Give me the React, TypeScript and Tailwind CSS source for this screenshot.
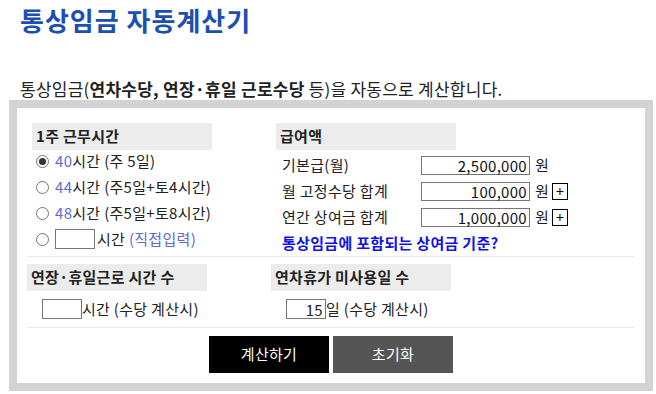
import React from "react";

const font = { fontFamily: '"Noto Sans CJK KR", "Noto Sans", sans-serif' };

function Radio({ checked }: { checked?: boolean }) {
  return (
    <span className="w-[13px] h-[13px] rounded-full border border-[#767676] bg-white flex items-center justify-center shrink-0">
      {checked && <span className="w-[7px] h-[7px] rounded-full bg-[#333]" />}
    </span>
  );
}

function MoneyRow({ label, value, plus }: { label: string; value: string; plus?: boolean }) {
  return (
    <div className="h-[26px] flex items-center">
      <div className="w-[145px] pl-[6px] text-[15px] tracking-[0.3px] text-[#222]">{label}</div>
      <div className="w-[109px] h-[19px] border border-[#767676] flex items-center justify-end pr-[2px] text-[15px] tracking-[0.3px] text-[#111] leading-none">
        {value}
      </div>
      <span className="ml-[5px] text-[15px] text-[#222]">원</span>
      {plus && (
        <span className="ml-[3px] w-[16px] h-[17px] border border-black flex items-center justify-center text-[14px] leading-none text-black">
          +
        </span>
      )}
    </div>
  );
}

const body = "text-[15px] tracking-[0.3px] text-[#222]";
const head = "w-[180px] h-[27px] bg-[#ececec] flex items-center pl-[4px] text-[15px] tracking-[0.3px] font-bold text-[#222]";

export default function App() {
  return (
    <div className="w-[656px] h-[394px] bg-white overflow-hidden" style={font}>
      <div className="h-[40px] pl-[20px] flex items-center">
        <h1 className="text-[26px] tracking-[1px] font-bold text-[#1c4fb0] leading-none">통상임금 자동계산기</h1>
      </div>
      <div className="mt-[37px] h-[22px] pl-[20px] flex items-center text-[17px] tracking-[0.25px] text-[#222] leading-none">
        통상임금(<b>연차수당, 연장·휴일 근로수당</b>&nbsp;등)을 자동으로 계산합니다.
      </div>
      <div className="mt-[1px] ml-[9px] w-[644px] h-[291px] border-[8px] border-[#d3d3d3] bg-white px-[10px]">
        {/* section 1 */}
        <div className="flex pt-[15px] h-[148px]">
          <div className="w-[244px] pl-[5px]">
            <div className={head}>1주 근무시간</div>
            <div className="-mt-[2px]">
              <div className={`h-[26px] flex items-center pl-[4px] ${body}`}>
                <Radio checked />
                <span className="ml-[6px] text-[#5b6bd6]">40</span>
                <span>시간 (주 5일)</span>
              </div>
              <div className={`h-[26px] flex items-center pl-[4px] ${body}`}>
                <Radio />
                <span className="ml-[6px] text-[#5b6bd6]">44</span>
                <span>시간 (주5일+토4시간)</span>
              </div>
              <div className={`h-[26px] flex items-center pl-[4px] ${body}`}>
                <Radio />
                <span className="ml-[6px] text-[#5b6bd6]">48</span>
                <span>시간 (주5일+토8시간)</span>
              </div>
              <div className={`h-[26px] flex items-center pl-[4px] ${body}`}>
                <Radio />
                <span className="ml-[6px] w-[40px] h-[20px] border border-[#767676] bg-white" />
                <span className="ml-[2px] whitespace-pre">시간 </span>
                <span className="text-[#5b6bd6]">(직접입력)</span>
              </div>
            </div>
          </div>
          <div className="pl-[5px]">
            <div className={head}>급여액</div>
            <div className="mt-[2px]">
              <MoneyRow label="기본급(월)" value="2,500,000" />
              <MoneyRow label="월 고정수당 합계" value="100,000" plus />
              <MoneyRow label="연간 상여금 합계" value="1,000,000" plus />
              <div className="h-[26px] flex items-center pl-[6px] text-[15px] tracking-[0.3px] font-bold text-[#1010ee]">
                통상임금에 포함되는 상여금 기준?
              </div>
            </div>
          </div>
        </div>
        <div className="h-px bg-[#ebebeb]" />
        {/* section 2 */}
        <div className="flex pt-[7px] h-[70px]">
          <div className="w-[244px]">
            <div className={head}>연장·휴일근로 시간 수</div>
            <div className={`mt-[7px] pl-[15px] flex items-center ${body}`}>
              <span className="w-[40px] h-[20px] border border-[#767676]" />
              <span>시간 (수당 계산시)</span>
            </div>
          </div>
          <div>
            <div className={head}>연차휴가 미사용일 수</div>
            <div className={`mt-[7px] pl-[15px] flex items-center ${body}`}>
              <span className="w-[40px] h-[20px] border border-[#767676] flex items-center justify-end pr-[2px] leading-none">15</span>
              <span>일 (수당 계산시)</span>
            </div>
          </div>
        </div>
        <div className="h-px bg-[#ebebeb]" />
        <div className="flex justify-center gap-[4px] pt-[8px]">
          <div className="w-[120px] h-[37px] bg-black text-white text-[15px] tracking-[0.3px] flex items-center justify-center">계산하기</div>
          <div className="w-[120px] h-[37px] bg-[#555555] text-white text-[15px] tracking-[0.3px] flex items-center justify-center">초기화</div>
        </div>
      </div>
    </div>
  );
}
